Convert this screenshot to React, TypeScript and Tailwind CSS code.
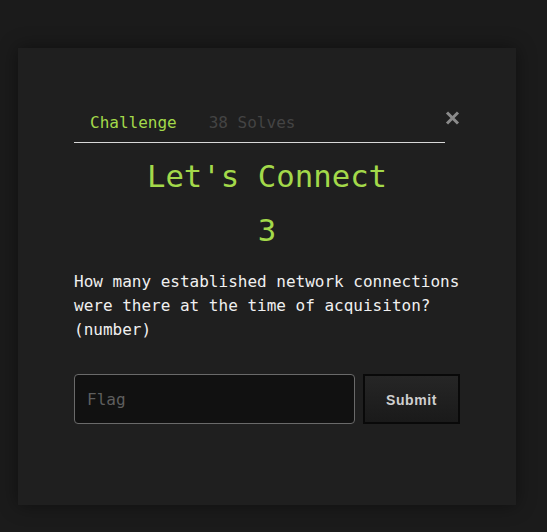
import React from 'react';

const mono = "font-['DejaVu_Sans_Mono',monospace]";

export default function App() {
  return (
    <div className="min-h-screen bg-[#1b1b1b] px-[18px] pt-[48px] pb-[27px]">
      <div className="w-[498px] bg-[#1f1f1f] shadow-[0_0_18px_rgba(0,0,0,0.45)] px-[56px] pt-[56px] pb-[81px]">
        {/* Tabs */}
        <div className="flex items-start">
          <nav className={`flex-1 flex border-b border-[#d8d8d8] ${mono} text-[16px] leading-[24px]`}>
            <span className="px-[16px] py-[7px] text-[#a3d94a]">Challenge</span>
            <span className="px-[16px] py-[7px] text-[#444444]">38 Solves</span>
          </nav>
          <button className="w-[15px] mt-[6px] text-[#8a8a8a]">
            <svg viewBox="0 0 15 16" className="w-[15px] h-[16px]">
              <path d="M2 2.5 L13 13.5 M13 2.5 L2 13.5" stroke="currentColor" strokeWidth="3" />
            </svg>
          </button>
        </div>

        {/* Heading */}
        <h1 className={`${mono} mt-[14px] text-center text-[30.7px] leading-[40px] text-[#a3d94a]`}>
          Let's Connect
        </h1>
        <p className={`${mono} mt-[14px] text-center text-[30.7px] leading-[40px] text-[#a3d94a]`}>3</p>

        <p className={`${mono} mt-[19px] text-[16px] leading-[24px] text-[#f0f0f0]`}>
          How many established network connections were there at the time of acquisiton? (number)
        </p>

        {/* Flag form */}
        <div className="mt-[32px] flex gap-[8px]">
          <input
            placeholder="Flag"
            className={`${mono} w-[281px] h-[50px] rounded-[4px] border border-[#6a6a6a] bg-[#111111] px-[12px] text-[16px] text-[#ddd] placeholder:text-[#5e5e5e] outline-none`}
          />
          <button className="w-[97px] h-[50px] pt-[3px] border-2 border-[#090909] bg-gradient-to-b from-[#262626] to-[#1a1a1a] font-['Liberation_Sans',Arial,sans-serif] font-bold text-[14px] tracking-[0.6px] text-[#cfcfcf]">
            Submit
          </button>
        </div>
      </div>
    </div>
  );
}
